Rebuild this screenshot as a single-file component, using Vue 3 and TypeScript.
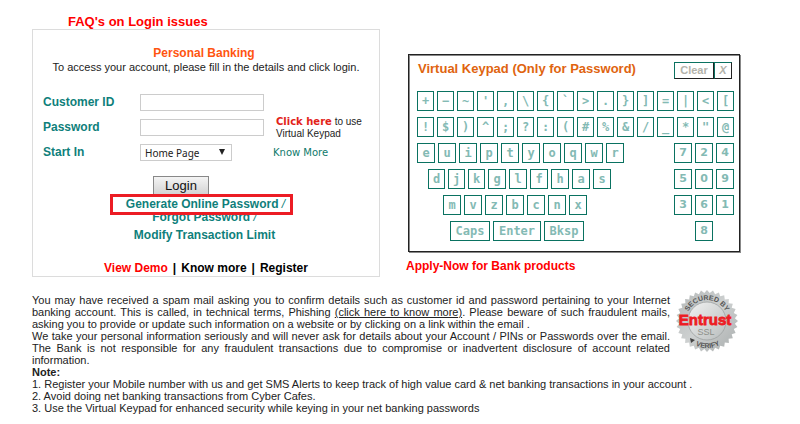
<script setup lang="ts">
import { ref } from 'vue'

interface Key {
  label: string
  size?: 'narrow' | 'wide' | 'wider'
}

interface KeyRow {
  kind: 'symbols' | 'letters' | 'home' | 'lower' | 'actions'
  main: Key[]
  digits: Key[]
}

const toKeys = (chars: string): Key[] => chars.split('').map((label) => ({ label }))

const rows: KeyRow[] = [
  { kind: 'symbols', main: toKeys("+−~',\\{`>.}]=|<["), digits: [] },
  { kind: 'symbols', main: toKeys('!$)^;?:(#%&/_*"@'), digits: [] },
  { kind: 'letters', main: toKeys('euiptyoqwr'), digits: toKeys('724') },
  {
    kind: 'home',
    main: toKeys('djkglfhas').map((k, i) => (i < 3 ? { ...k, size: 'narrow' } : k)),
    digits: toKeys('509'),
  },
  { kind: 'lower', main: toKeys('mvzbcnx'), digits: toKeys('361') },
  {
    kind: 'actions',
    main: [
      { label: 'Caps', size: 'wide' },
      { label: 'Enter', size: 'wider' },
      { label: 'Bksp', size: 'wide' },
    ],
    digits: toKeys('8'),
  },
]

const customerId = ref('')
const password = ref('')
const startIn = ref('Home Page')
const caps = ref(false)

function press(label: string): void {
  if (label === 'Caps') caps.value = !caps.value
  else if (label === 'Bksp') password.value = password.value.slice(0, -1)
  else if (label === '−') password.value += '-'
  else if (label !== 'Enter') password.value += caps.value ? label.toUpperCase() : label
}

// Outline of the seal: alternating outer and inner points around the centre.
const teeth = 32
const sealPoints = Array.from({ length: teeth * 2 }, (_, i) => {
  const radius = i % 2 === 0 ? 31 : 28
  const angle = (i * Math.PI) / teeth
  return `${(32 + radius * Math.cos(angle)).toFixed(1)},${(32 + radius * Math.sin(angle)).toFixed(1)}`
}).join(' ')
</script>

<template>
  <main class="page">
    <div class="top">
      <section class="login">
        <a class="faq" href="#">FAQ's on Login issues</a>
        <form class="card" @submit.prevent>
          <h1>Personal Banking</h1>
          <p class="intro">To access your account, please fill in the details and click login.</p>
          <div class="fields">
            <label for="cust">Customer ID</label>
            <input id="cust" v-model="customerId" type="text" />
            <span></span>
            <label for="pass">Password</label>
            <input id="pass" v-model="password" type="password" />
            <p class="hint"><a href="#">Click here</a> to use<br />Virtual Keypad</p>
            <label for="start">Start In</label>
            <span class="select">
              <select id="start" v-model="startIn">
                <option>Home Page</option>
              </select>
              <svg viewBox="0 0 6 6" aria-hidden="true"><path d="M0 0H6L3 6Z" /></svg>
            </span>
            <a class="know" href="#">Know More</a>
          </div>
          <button class="submit" type="submit">Login</button>
          <div class="links">
            <a class="marked" href="#">Generate Online Password <i>/</i></a>
            <a class="forgot" href="#">Forgot Password <i>/</i></a>
            <a class="modify" href="#">Modify Transaction Limit</a>
          </div>
          <nav class="more">
            <a class="demo" href="#">View Demo</a><b>|</b><a href="#">Know more</a><b>|</b><a href="#">Register</a>
          </nav>
        </form>
      </section>

      <section class="side">
        <div class="keypad">
          <header>
            <h2>Virtual Keypad (Only for Password)</h2>
            <div class="tools">
              <button type="button" @click="password = ''">Clear</button>
              <button type="button" class="close">X</button>
            </div>
          </header>
          <div v-for="(row, r) in rows" :key="r" class="row" :class="row.kind">
            <div class="keys">
              <button v-for="k in row.main" :key="k.label" type="button" class="key" :class="k.size" @click="press(k.label)">{{ k.label }}</button>
            </div>
            <div v-if="row.digits.length" class="keys digits">
              <button v-for="k in row.digits" :key="k.label" type="button" class="key" @click="press(k.label)">{{ k.label }}</button>
            </div>
          </div>
        </div>
        <a class="apply" href="#">Apply-Now for Bank products</a>
      </section>
    </div>

    <div class="bottom">
      <section class="notice">
        <p>You may have received a spam mail asking you to confirm details such as customer id and password pertaining to your Internet banking account. This is called, in technical terms, Phishing <a href="#">(click here to know more)</a>. Please beware of such fraudulent mails, asking you to provide or update such information on a website or by clicking on a link within the email .</p>
        <p>We take your personal information seriously and will never ask for details about your Account / PINs or Passwords over the email. The Bank is not responsible for any fraudulent transactions due to compromise or inadvertent disclosure of account related information.</p>
        <strong>Note:</strong>
        <div class="notes">
          <div>1. Register your Mobile number with us and get SMS Alerts to keep track of high value card &amp; net banking transactions in your account .</div>
          <div>2. Avoid doing net banking transactions from Cyber Cafes.</div>
          <div>3. Use the Virtual Keypad for enhanced security while keying in your net banking passwords</div>
        </div>
      </section>
      <svg class="seal" viewBox="0 0 64 64" role="img">
        <defs>
          <linearGradient id="metal" x1="0" y1="0" x2="1" y2="1">
            <stop offset="0" stop-color="#b4b8b8" />
            <stop offset="0.5" stop-color="#cdd0d0" />
            <stop offset="1" stop-color="#a9adad" />
          </linearGradient>
          <linearGradient id="disc" x1="0" y1="0" x2="1" y2="1">
            <stop offset="0" stop-color="#f1f2f2" />
            <stop offset="1" stop-color="#b9bdbd" />
          </linearGradient>
          <path id="arcTop" d="M11 32A21 21 0 0 1 53 32" />
          <path id="arcBottom" d="M5 32A27 27 0 0 0 59 32" />
        </defs>
        <polygon :points="sealPoints" fill="url(#metal)" />
        <circle cx="32" cy="32" r="19" fill="url(#disc)" stroke="#9da1a1" stroke-width="0.8" />
        <text class="ring"><textPath href="#arcTop" startOffset="50%" text-anchor="middle">SECURED BY</textPath></text>
        <path d="M15 49L20 51L16 54Z" fill="#444" />
        <text class="ring"><textPath href="#arcBottom" startOffset="51%" text-anchor="middle">VERIFY</textPath></text>
        <text class="ssl" x="31" y="46" text-anchor="middle">SSL</text>
        <text class="brand" x="30" y="36" text-anchor="middle">Entrust</text>
      </svg>
    </div>
  </main>
</template>

<style>
body {
  background: #fff;
}
</style>

<style scoped>
.page {
  box-sizing: border-box;
  padding: 14px 32px 8px;
  font-family: "Liberation Sans", Arial, sans-serif;
  font-size: 12px;
  line-height: 15px;
  color: #222;
}
h1,
h2,
p {
  margin: 0;
}
a {
  color: inherit;
  text-decoration: none;
}
button,
input,
select {
  box-sizing: border-box;
  margin: 0;
  padding: 0;
  border-radius: 0;
  font-family: inherit;
}
.top {
  display: grid;
  grid-template-columns: 348px 335px;
  column-gap: 26px;
}
.faq {
  display: block;
  padding-left: 36px;
  font-size: 13px;
  font-weight: bold;
  color: #f00;
}
.card {
  box-sizing: border-box;
  display: flex;
  flex-direction: column;
  border: 1px solid #dcdcdc;
  padding-top: 16px;
}
h1 {
  padding-right: 4px;
  font-size: 12px;
  line-height: 15px;
  text-align: center;
  color: #ff5511;
}
.intro {
  font-size: 11px;
  line-height: 13px;
  text-align: center;
}
.fields {
  display: grid;
  grid-template-columns: 97px 124px 1fr;
  grid-template-rows: 17px 17px 17px;
  row-gap: 8px;
  padding: 20px 0 0 10px;
  align-items: center;
}
.fields label {
  font-weight: bold;
  color: #0f7f7b;
}
.fields input {
  width: 124px;
  height: 17px;
  border: 1px solid #ccc;
  padding: 0 3px;
  font-size: 11px;
}
.hint {
  padding: 0 0 0 12px;
  font-size: 10px;
  line-height: 12px;
  white-space: nowrap;
}
.hint a {
  font-family: "DejaVu Sans", Verdana, sans-serif;
  font-size: 10px;
  line-height: 10px;
  font-weight: bold;
  color: #e2231a;
}
.select {
  position: relative;
  display: block;
  width: 92px;
}
.select select {
  display: block;
  appearance: none;
  width: 100%;
  height: 17px;
  border: 1px solid #ccc;
  padding: 0 4px;
  background: #fff;
  font-family: "Noto Sans", sans-serif;
  font-size: 10px;
  color: #222;
}
.select svg {
  position: absolute;
  top: 5px;
  right: 7px;
  width: 6px;
  height: 6px;
  fill: #222;
  pointer-events: none;
}
.know {
  padding-left: 9px;
  font-family: "DejaVu Sans", Verdana, sans-serif;
  font-size: 10px;
  color: #0f7a6c;
}
.submit {
  width: 56px;
  height: 18px;
  margin: 15px 0 0 120px;
  border: 1px solid #888;
  border-bottom: 0;
  background: linear-gradient(#f4f4f4, #d4d4d4);
  font-size: 13px;
  line-height: 17px;
  color: #111;
}
.links {
  display: flex;
  flex-direction: column;
  align-items: center;
  padding-right: 3px;
  font-weight: bold;
  color: #0f7f7b;
}
.links i {
  font-weight: normal;
}
.marked {
  position: relative;
  z-index: 1;
  box-sizing: border-box;
  width: 183px;
  height: 21px;
  margin-right: 6px;
  border: 3px solid #ec1c24;
  padding-left: 8px;
  text-align: center;
  background: #fff;
}
.forgot {
  margin-top: -5px;
}
.modify {
  margin-top: 3px;
}
.more {
  display: flex;
  justify-content: center;
  gap: 5px;
  padding-top: 18px;
  font-weight: bold;
  color: #000;
}
.demo {
  color: #f00;
}
.side {
  padding-top: 40px;
}
.keypad {
  box-sizing: border-box;
  margin: 0 1px 0 2px;
  border: 1px solid #222;
  padding: 7px 5px 10px 8px;
  box-shadow: 1px 1px 0 #888, inset 1px 1px 0 #888;
}
.keypad header {
  display: flex;
  justify-content: space-between;
  padding: 0 2px 6px 1px;
}
h2 {
  font-size: 13px;
  line-height: 13px;
  color: #e0640f;
}
.tools {
  display: flex;
}
.tools button {
  width: 40px;
  height: 17px;
  border: 1px solid #0a7261;
  border-right-color: #222;
  border-bottom-color: #222;
  background: #fff;
  font-size: 11px;
  font-weight: bold;
  line-height: 15px;
  color: #b3b3ab;
}
.tools .close {
  width: 18px;
  font-style: italic;
}
.row {
  display: flex;
  justify-content: space-between;
  padding-top: 6px;
}
.keys {
  display: flex;
  gap: 3px;
}
.key {
  width: 18px;
  height: 20px;
  border: 1px solid #0a7261;
  background: #fff;
  font-family: "DejaVu Sans Mono", monospace;
  font-size: 12px;
  font-weight: bold;
  line-height: 18px;
  color: #84bab4;
}
.symbols .key,
.key.narrow {
  width: 17px;
}
.key.wide {
  width: 40px;
}
.key.wider {
  width: 48px;
}
.digits .key {
  font-family: "DejaVu Sans", Verdana, sans-serif;
  font-size: 11px;
}
.home {
  padding-left: 11px;
}
.lower {
  padding-left: 26px;
}
.actions {
  padding-left: 33px;
}
.actions .digits {
  padding-right: 21px;
}
.apply {
  display: block;
  margin-top: 7px;
  font-weight: bold;
  color: #f00;
}
.bottom {
  display: flex;
  gap: 5px;
  padding-top: 17px;
}
.notice {
  width: 638px;
  font-size: 11px;
  line-height: 12px;
  text-align: justify;
}
.notice p a {
  text-decoration: underline;
}
.notice strong {
  display: block;
}
.notes {
  text-align: left;
  white-space: nowrap;
}
.seal {
  flex: none;
  width: 64px;
  height: 64px;
  margin-top: -5px;
}
.ring {
  font-size: 7px;
  font-weight: bold;
  fill: #555;
}
.ssl {
  font-size: 9px;
  fill: #8d9089;
}
.brand {
  font-size: 15px;
  font-weight: bold;
  fill: #ed1c24;
  stroke: #ed1c24;
  stroke-width: 0.8;
}
</style>
